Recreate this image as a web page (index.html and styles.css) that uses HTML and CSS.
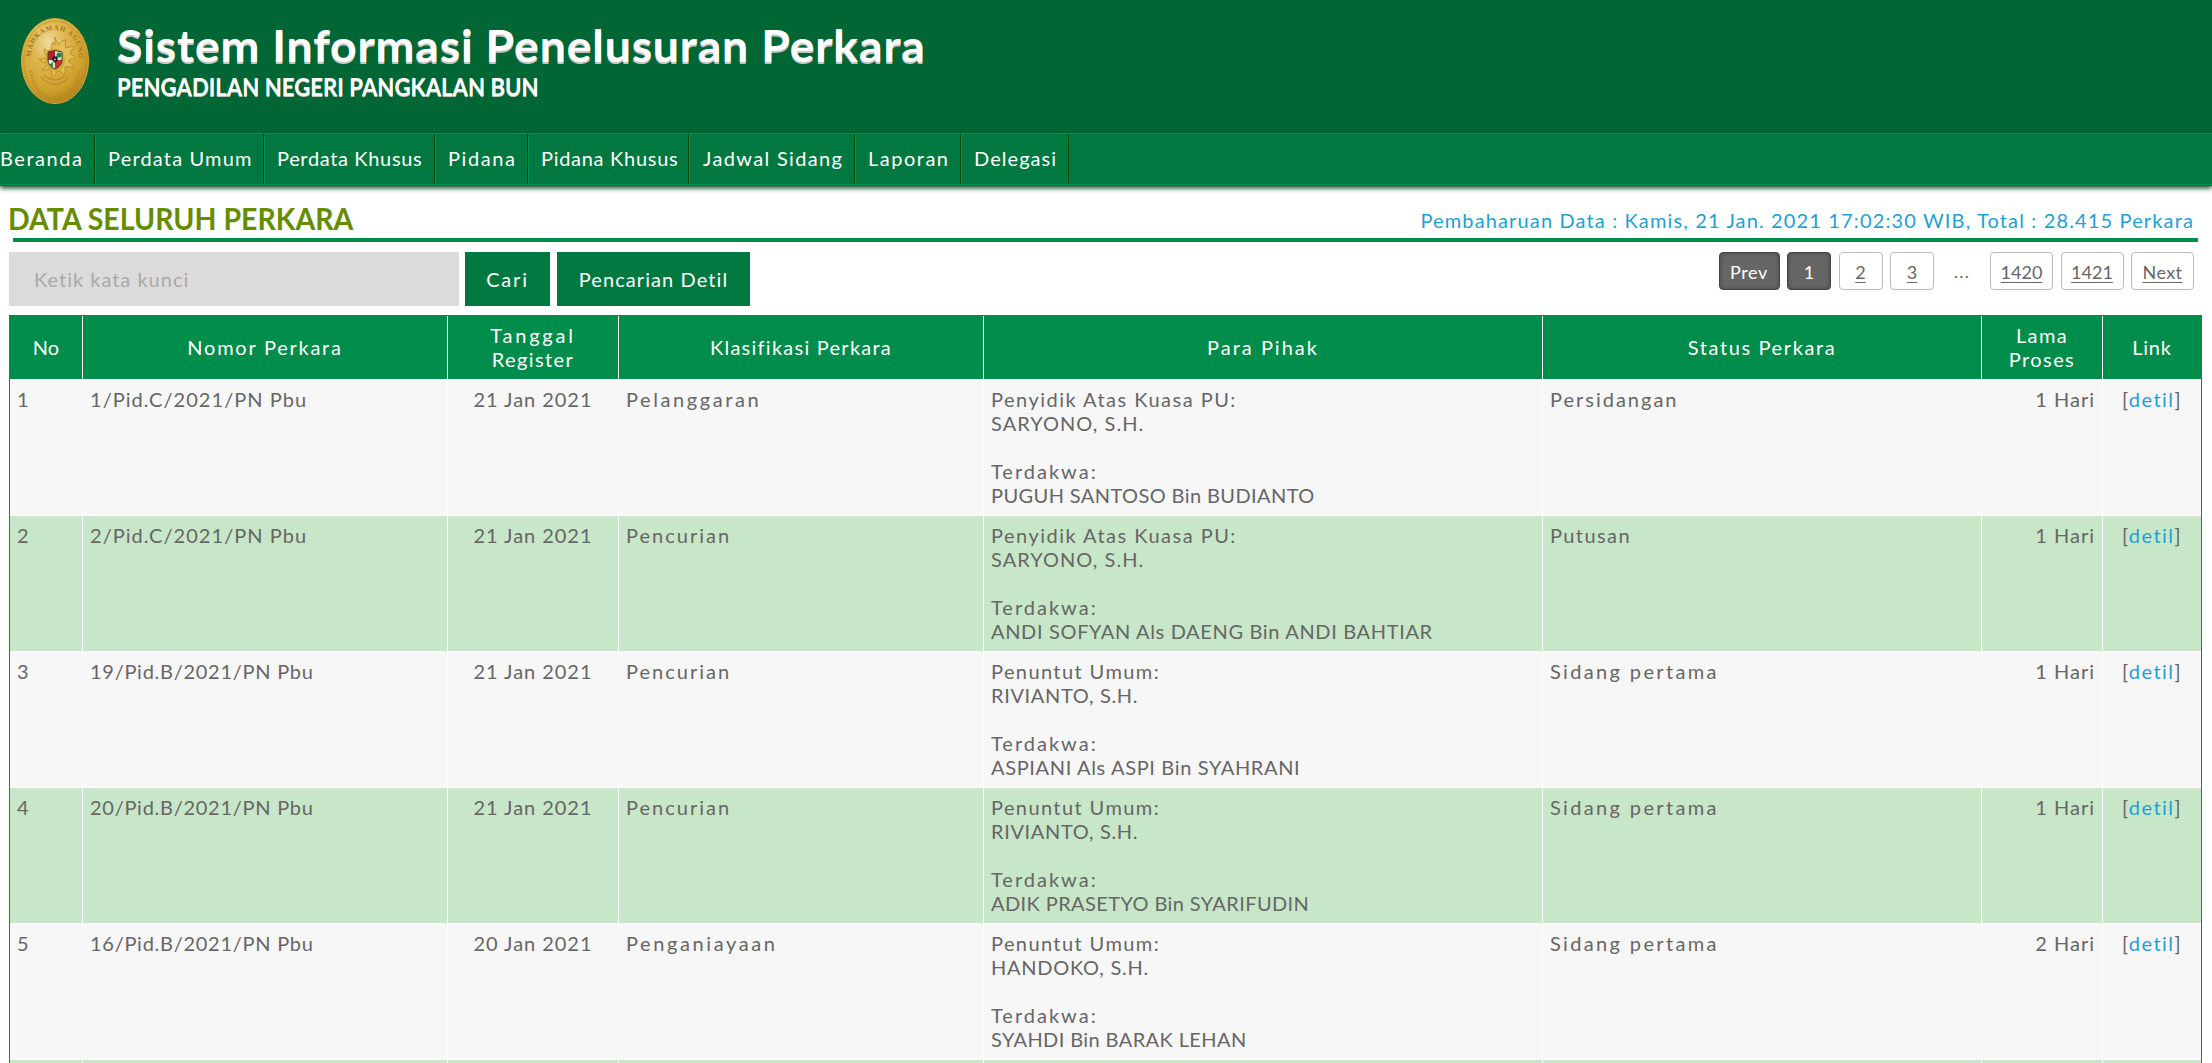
FILE: index.html
```html
<!DOCTYPE html>
<html lang="id">
<head>
<meta charset="utf-8">
<title>Sistem Informasi Penelusuran Perkara</title>
<link rel="stylesheet" href="styles.css">
</head>
<body>
<header class="header">
  <svg class="logo" width="68" height="86" viewBox="0 0 68 86">
    <defs>
      <radialGradient id="gold" cx=".4" cy=".28" r=".8"><stop offset="0" stop-color="#f0dca0"/><stop offset=".3" stop-color="#dfb851"/><stop offset=".7" stop-color="#d0a02c"/><stop offset="1" stop-color="#a87718"/></radialGradient>
      <path id="arcTop" d="M10 39C11 3 57 3 58 39"/>
      <clipPath id="shield"><path d="M27 34q7-3 14 0v8q0 6-7 9-7-3-7-9z"/></clipPath>
    </defs>
    <ellipse cx="34" cy="43" rx="33.5" ry="42.5" fill="url(#gold)" stroke="#d9aa3b"/>
    <ellipse cx="34" cy="43" rx="31.3" ry="40" fill="none" stroke="#bd8e2a" stroke-width=".7"/>
    <text class="logo-text"><textPath href="#arcTop" textLength="82">MAHKAMAH AGUNG</textPath></text>
    <path d="M10 53q4 26 24 27 20-1 24-27" fill="none" stroke="#b4851f" stroke-width="3" stroke-dasharray="1.5 1.5" opacity=".65"/>
    <path d="M20 59q14 15 28 0M23 57q11 10 22 0" fill="none" stroke="#b98a25" stroke-width="1.3" opacity=".8"/>
    <path d="M34 19l3 8q3-5 8-5-2 4 0 8 4-2 9-1-5 3-5 7 4 1 5 5-5-1-7 2 5 3 6 8-5-4-9-2 1 4-1 8-3-5-7-4-1 4-5 7 1-6-2-9-4 2-8 1 5-3 5-7-5 0-8-4 5 1 8-2-3-3-3-8 4 3 7 1 0-4 2-8 1 4 2 3z" fill="#e3bd55" stroke="#b58720" stroke-width=".8"/>
    <ellipse cx="34" cy="42" rx="10" ry="11.5" fill="#d5a83a"/>
    <g clip-path="url(#shield)"><path d="M26 32h8v10h-8z" fill="#b91f25"/><path d="M34 32h8v10h-8z" fill="#d6e4d6"/><path d="M26 42h8v10h-8z" fill="#e7e3d6"/><path d="M34 42h8v10h-8z" fill="#c8302a"/><circle cx="38" cy="37" r="2.5" fill="#178c4a"/><path d="M28 47l4-3v5z" fill="#2d8a4d"/></g>
    <path d="M27 34q7-3 14 0v8q0 6-7 9-7-3-7-9z" fill="none" stroke="#4f3a25" stroke-width="1"/>
    <path d="M31.500 38.500h5v4l-2.500 2.500-2.500-2.500z" fill="#1c1917"/><circle cx="34" cy="41.500" r=".9" fill="#e6c24a"/>
  </svg>
  <div class="brand">
    <h1>Sistem Informasi Penelusuran Perkara</h1>
    <p>PENGADILAN NEGERI PANGKALAN BUN</p>
  </div>
</header>
<nav class="nav">
  <a class="m-beranda">Beranda</a><a class="m-umum">Perdata Umum</a><a class="m-khusus">Perdata Khusus</a><a class="m-pidana">Pidana</a><a class="m-pkhusus">Pidana Khusus</a><a class="m-jadwal">Jadwal Sidang</a><a class="m-laporan">Laporan</a><a class="m-delegasi">Delegasi</a>
</nav>
<main>
  <div class="titlebar">
    <h2>DATA SELURUH PERKARA</h2>
    <span class="updated">Pembaharuan Data : Kamis, 21 Jan. 2021 17:02:30 WIB, Total : 28.415 Perkara</span>
  </div>
  <div class="toolbar">
    <input class="search" type="text" placeholder="Ketik kata kunci">
    <button class="btn cari">Cari</button>
    <button class="btn detil">Pencarian Detil</button>
    <div class="pager">
      <span class="pg dark wide-p">Prev</span><span class="pg dark">1</span><a class="pg">2</a><a class="pg">3</a><span class="dots">...</span><a class="pg wide">1420</a><a class="pg wide">1421</a><a class="pg wide next">Next</a>
    </div>
  </div>
  <table class="cases">
    <colgroup><col class="c1"><col class="c2"><col class="c3"><col class="c4"><col class="c5"><col class="c6"><col class="c7"><col class="c8"></colgroup>
    <thead>
      <tr><th>No</th><th class="s18">Nomor Perkara</th><th><span class="s29">Tanggal</span><br><span class="s14">Register</span></th><th class="s13">Klasifikasi Perkara</th><th class="s20">Para Pihak</th><th class="s16">Status Perkara</th><th class="s14">Lama<br>Proses</th><th class="s07">Link</th></tr>
    </thead>
    <tbody>
      <tr><td>1</td><td class="s10">1/Pid.C/2021/PN Pbu</td><td class="date">21 Jan 2021</td><td class="s26">Pelanggaran</td><td><span class="s15">Penyidik Atas Kuasa PU:</span><br><span class="s10">SARYONO, S.H.</span><br><br><span class="s20">Terdakwa:</span><br><span class="s04">PUGUH SANTOSO Bin BUDIANTO</span></td><td class="s20">Persidangan</td><td class="days">1 Hari</td><td class="link">[<a>detil</a>]</td></tr>
      <tr><td>2</td><td class="s10">2/Pid.C/2021/PN Pbu</td><td class="date">21 Jan 2021</td><td class="s20">Pencurian</td><td><span class="s15">Penyidik Atas Kuasa PU:</span><br><span class="s10">SARYONO, S.H.</span><br><br><span class="s20">Terdakwa:</span><br><span class="s06">ANDI SOFYAN Als DAENG Bin ANDI BAHTIAR</span></td><td class="s14">Putusan</td><td class="days">1 Hari</td><td class="link">[<a>detil</a>]</td></tr>
      <tr><td>3</td><td class="s07">19/Pid.B/2021/PN Pbu</td><td class="date">21 Jan 2021</td><td class="s20">Pencurian</td><td><span class="s14">Penuntut Umum:</span><br><span class="s06">RIVIANTO, S.H.</span><br><br><span class="s20">Terdakwa:</span><br><span class="s06">ASPIANI Als ASPI Bin SYAHRANI</span></td><td class="s23">Sidang pertama</td><td class="days">1 Hari</td><td class="link">[<a>detil</a>]</td></tr>
      <tr><td>4</td><td class="s07">20/Pid.B/2021/PN Pbu</td><td class="date">21 Jan 2021</td><td class="s20">Pencurian</td><td><span class="s14">Penuntut Umum:</span><br><span class="s06">RIVIANTO, S.H.</span><br><br><span class="s20">Terdakwa:</span><br><span class="s04">ADIK PRASETYO Bin SYARIFUDIN</span></td><td class="s23">Sidang pertama</td><td class="days">1 Hari</td><td class="link">[<a>detil</a>]</td></tr>
      <tr><td>5</td><td class="s07">16/Pid.B/2021/PN Pbu</td><td class="date">20 Jan 2021</td><td class="s26">Penganiayaan</td><td><span class="s14">Penuntut Umum:</span><br><span class="s07">HANDOKO, S.H.</span><br><br><span class="s20">Terdakwa:</span><br><span class="s04">SYAHDI Bin BARAK LEHAN</span></td><td class="s23">Sidang pertama</td><td class="days">2 Hari</td><td class="link">[<a>detil</a>]</td></tr>
      <tr class="cut"><td></td><td></td><td></td><td></td><td></td><td></td><td></td><td></td></tr>
    </tbody>
  </table>
</main>
</body>
</html>
```
FILE: styles.css
```css
* { box-sizing: border-box; }
body {
  margin: 0;
  height: 1063px;
  overflow: hidden;
  background: #fff;
  color: #666;
  font: 400 20px/24px Lato, "Century Gothic", sans-serif;
}
h1, h2, p { margin: 0; }

.header {
  display: flex;
  height: 133px;
  padding: 18px 0 0 21px;
  background: #006633;
}
.logo { flex: none; }
.logo-text { font: 700 7px "Liberation Serif", serif; fill: #a4761b; }
.brand { padding: 2px 0 0 28px; color: #fff; white-space: nowrap; }
.brand h1 {
  width: max-content;
  font-size: 43px;
  line-height: 52px;
  letter-spacing: .75px;
  text-shadow: 0 2px 0 #c4c4c4;
  transform: scaleX(1.08);
  transform-origin: left;
}
.brand p {
  width: max-content;
  font-size: 24px;
  font-weight: 700;
  line-height: 28px;
  text-shadow: 0 1px 0 #c4c4c4;
  transform: translateY(1px) scaleX(.924);
  transform-origin: left;
}

.nav {
  display: flex;
  height: 52px;
  background: #007840;
  border-top: 1px solid #008f4c;
  border-bottom: 1px solid #008f4c;
  box-shadow: 0 1px 0 #006f3a, 0 3px 5px #00401f;
}
.nav a {
  flex: none;
  padding: 12px 0 0 12px;
  border-left: 1px solid #008f4c;
  border-right: 1px solid #004d00;
  color: #fff;
  white-space: nowrap;
}
.nav .m-beranda { width: 95px; padding-left: 0; border-left: 0; letter-spacing: 1.54px; }
.nav .m-umum { width: 169px; letter-spacing: 1.17px; }
.nav .m-khusus { width: 171px; letter-spacing: .65px; }
.nav .m-pidana { width: 93px; letter-spacing: 1.6px; }
.nav .m-pkhusus { width: 161px; letter-spacing: .71px; }
.nav .m-jadwal { width: 166px; padding-left: 13px; letter-spacing: 1.34px; }
.nav .m-laporan { width: 106px; letter-spacing: 1.5px; }
.nav .m-delegasi { width: 108px; letter-spacing: 1.06px; }

main { padding: 13px 10px 0 9px; }
.titlebar {
  display: flex;
  justify-content: space-between;
  height: 44px;
  margin: 0 4px;
  border-bottom: 4px solid #008c4a;
  white-space: nowrap;
}
.titlebar h2 {
  margin-left: -5px;
  color: #668c00;
  font-size: 31px;
  line-height: 41px;
  transform: scaleX(.92);
  transform-origin: left;
}
.updated { padding-top: 10px; margin-right: 4px; color: #1f9fd1; letter-spacing: 1.14px; }

.toolbar { display: flex; height: 73px; padding-top: 10px; }
.search {
  width: 450px;
  height: 54px;
  margin-right: 6px;
  padding: 0 25px;
  border: 0;
  background: #dddbda;
  font: inherit;
  letter-spacing: 1px;
}
.search::placeholder { color: #a9a9a9; opacity: 1; }
.btn {
  height: 54px;
  padding: 0;
  border: 0;
  background: #007840;
  color: #fff;
  font: inherit;
  white-space: nowrap;
}
.cari { width: 85px; margin-right: 7px; letter-spacing: 1.8px; }
.detil { width: 193px; letter-spacing: 1.08px; }

.pager { display: flex; gap: 7.5px; margin: 0 8px 0 auto; font-size: 18px; }
.pg {
  width: 44px;
  height: 38px;
  padding-top: 7px;
  border: 1px solid #bbb;
  border-radius: 4px;
  text-align: center;
  text-decoration: underline;
  text-decoration-thickness: 1px;
  text-underline-offset: 3px;
}
.pg.dark {
  border-color: #444;
  background: #666;
  color: #fff;
  text-decoration: none;
  box-shadow: inset 0 0 4px #444;
}
.pg.wide-p { width: 61px; letter-spacing: .6px; }
.pg.wide { width: 63px; }
.pg.next { letter-spacing: .4px; }
.dots { width: 41px; padding-top: 7px; text-align: center; letter-spacing: 1.3px; }

.cases {
  width: 2193px;
  table-layout: fixed;
  border-collapse: separate;
  border-spacing: 0;
  border: 1px solid #008c4a;
  border-bottom: 0;
  white-space: nowrap;
}
.c1 { width: 72px; }
.c2, .c4 { width: 365px; }
.c3 { width: 171px; }
.c5 { width: 559px; }
.c6 { width: 439px; }
.c7 { width: 121px; }
.c8 { width: 99px; }
.cases th {
  height: 63px;
  padding: 0 0 2px;
  background: #008c4a;
  color: #fff;
  font-weight: 400;
}
.cases td {
  height: 136px;
  padding: 7px 7px 0;
  border-top: 1px solid #fff;
  background: #f7f7f7;
  vertical-align: top;
}
.cases th + th, .cases td + td { border-left: 1px solid #fff; }
.cases tr:nth-child(even) td { background: #c8e6c8; }
.cases .cut td { height: 4px; padding: 0; }
.cases .date { text-align: center; letter-spacing: .96px; }
.cases .days { text-align: right; letter-spacing: 1px; }
.cases .link { text-align: center; letter-spacing: 1.47px; }
.link a { color: #1f9fd8; }

/* tracking steps */
.s04 { letter-spacing: .4px; }
.s06 { letter-spacing: .65px; }
.s07 { letter-spacing: .73px; }
.s10 { letter-spacing: 1.04px; }
.s13 { letter-spacing: 1.25px; }
.s14 { letter-spacing: 1.4px; }
.s15 { letter-spacing: 1.48px; }
.s16 { letter-spacing: 1.61px; }
.s18 { letter-spacing: 1.75px; }
.s20 { letter-spacing: 2px; }
.s23 { letter-spacing: 2.35px; }
.s26 { letter-spacing: 2.6px; }
.s29 { letter-spacing: 2.8px; }
```
